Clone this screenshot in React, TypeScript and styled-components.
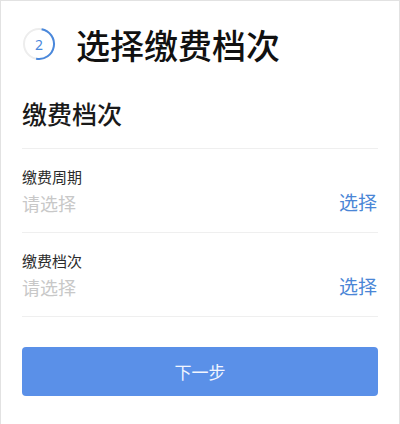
import React from 'react';
import styled, { createGlobalStyle } from 'styled-components';

const GlobalStyle = createGlobalStyle`
  html, body {
    margin: 0;
    padding: 0;
    background: #ffffff;
  }
  body {
    font-family: "Noto Sans CJK SC", "Noto Sans", sans-serif;
    color: #1a1a1a;
  }
`;

const Page = styled.div`
  box-sizing: border-box;
  width: 400px;
  height: 424px;
  border: 1px solid #e2e2e2;
  border-bottom: none;
  padding: 0 21px;
  background: #fff;
  overflow: hidden;
`;

const Header = styled.div`
  display: flex;
  align-items: center;
  height: 88px;
  gap: 20px;
`;

const StepRing = styled.div`
  position: relative;
  width: 34px;
  height: 34px;
  display: flex;
  align-items: center;
  justify-content: center;
  margin-top: -2px;
`;

const StepNumber = styled.span`
  position: absolute;
  inset: 0;
  display: flex;
  align-items: center;
  justify-content: center;
  font-family: "Noto Sans", "Liberation Sans", sans-serif;
  font-size: 14px;
  color: #4a88dc;
`;

const Title = styled.h1`
  margin: 0;
  font-size: 34px;
  font-weight: 500;
  line-height: 40px;
  color: #111;
`;

const SectionTitle = styled.h2`
  margin: 9px 0 0;
  padding-bottom: 20px;
  font-size: 25px;
  font-weight: 500;
  line-height: 30px;
  color: #1a1a1a;
  border-bottom: 1px solid #efefef;
`;

const FieldRow = styled.div`
  display: flex;
  align-items: flex-end;
  justify-content: space-between;
  padding: 18px 0 17px;
  border-bottom: 1px solid #efefef;
`;

const FieldText = styled.div`
  display: flex;
  flex-direction: column;
  gap: 4px;
`;

const FieldLabel = styled.span`
  font-size: 15px;
  line-height: 20px;
  color: #2b2b2b;
`;

const Placeholder = styled.span`
  font-size: 18px;
  line-height: 24px;
  color: #c8c8c8;
`;

const PickLink = styled.span`
  font-size: 19px;
  line-height: 26px;
  margin-right: 1px;
  color: #4a86d6;
`;

const NextButton = styled.button`
  display: block;
  width: 100%;
  height: 49px;
  margin-top: 30px;
  border: none;
  border-radius: 4px;
  background: #5a90e8;
  color: #f2f6ff;
  font-family: "Noto Sans CJK SC", "Noto Sans", sans-serif;
  font-size: 17px;
  cursor: pointer;
`;

const ProgressRing: React.FC<{ step: number }> = ({ step }) => {
  const r = 15;
  const c = 2 * Math.PI * r;
  return (
    <StepRing>
      <svg width="34" height="34" viewBox="0 0 34 34">
        <circle cx="17" cy="17" r={r} fill="none" stroke="#ededed" strokeWidth="2" />
        <circle
          cx="17"
          cy="17"
          r={r}
          fill="none"
          stroke="#4a88dc"
          strokeWidth="2"
          strokeDasharray={`${c * 0.5} ${c}`}
          transform="rotate(-80 17 17)"
        />
      </svg>
      <StepNumber>{step}</StepNumber>
    </StepRing>
  );
};

const fields = ['缴费周期', '缴费档次'];

export default function App() {
  return (
    <>
      <GlobalStyle />
      <Page>
        <Header>
          <ProgressRing step={2} />
          <Title>选择缴费档次</Title>
        </Header>
        <SectionTitle>缴费档次</SectionTitle>
        {fields.map((label) => (
          <FieldRow key={label}>
            <FieldText>
              <FieldLabel>{label}</FieldLabel>
              <Placeholder>请选择</Placeholder>
            </FieldText>
            <PickLink>选择</PickLink>
          </FieldRow>
        ))}
        <NextButton>下一步</NextButton>
      </Page>
    </>
  );
}
